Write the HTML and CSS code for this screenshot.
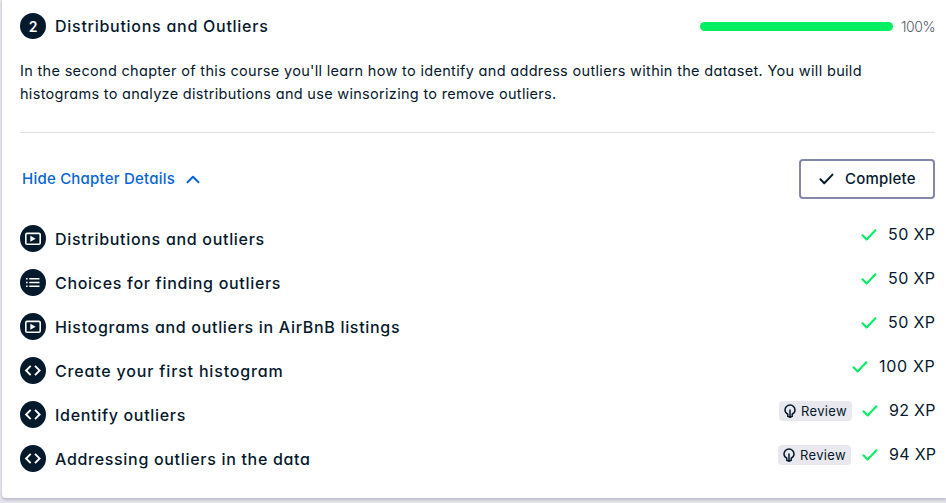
FILE: index.html
```
<!DOCTYPE html>
<html lang="en">
<head>
<meta charset="utf-8">
<title>Distributions and Outliers</title>
<link rel="stylesheet" href="styles.css">
</head>
<body>
<svg class="defs" aria-hidden="true">
  <symbol id="video" viewBox="0 0 26 27"><rect x="5.8" y="8.4" width="14.4" height="10.8" rx="1.3" fill="none" stroke="#fff" stroke-width="1.6"/><path d="M10.3 10.7v6l5.4-3z" fill="#fff"/></symbol>
  <symbol id="list" viewBox="0 0 26 27"><path d="M6 9.8h1.7M6 13.5h1.7M6 17.2h1.7M9.3 9.8h10.2M9.3 13.5h10.2M9.3 17.2h10.2" stroke="#fff" stroke-width="1.6" fill="none"/></symbol>
  <symbol id="code" viewBox="0 0 26 27"><path d="M10.7 8.9 6.1 13.5l4.6 4.6M15 8.9l4.6 4.6-4.6 4.6" stroke="#fff" stroke-width="1.9" fill="none"/></symbol>
  <symbol id="check" viewBox="0 0 16 12"><path d="m1.5 6.3 4.1 4.2L14.4 1.3" fill="none" stroke="currentColor" stroke-width="2.1" stroke-linecap="round" stroke-linejoin="round"/></symbol>
  <symbol id="bulb" viewBox="0 0 12 14"><path d="M3.8 10.2C1.9 9.2 1 7.8 1 6a5 5 0 0 1 10 0c0 1.800-.9 3.200-2.800 4.200v2.200L6 13.200l-2.200-.8zM6 5.500v7" fill="none" stroke="currentColor" stroke-width="1.500" stroke-linejoin="round"/></symbol>
</svg>
<main class="card">
  <header class="head">
    <span class="badge">2</span>
    <h2 class="title">Distributions and Outliers</h2>
    <div class="progress"></div>
    <span class="percent">100%</span>
  </header>
  <p class="intro"><span class="line-a">In the second chapter of this course you'll learn how to identify and address outliers within the dataset. You will build</span><br><span class="line-b">histograms to analyze distributions and use winsorizing to remove outliers.</span></p>
  <div class="bar">
    <a class="toggle"><span class="label">Hide Chapter Details</span><svg class="chevron" viewBox="0 0 14 9"><path d="M1.500 7.300 7 1.800l5.500 5.500" fill="none" stroke="currentColor" stroke-width="2" stroke-linecap="round" stroke-linejoin="round"/></svg></a>
    <button class="complete"><svg class="tick"><use href="#check"/></svg><span class="label">Complete</span></button>
  </div>
  <ul class="list">
    <li><svg class="icon"><use href="#video"/></svg><span class="name">Distributions and outliers</span><span class="score"><svg class="check"><use href="#check"/></svg><span class="xp">50 XP</span></span></li>
    <li><svg class="icon"><use href="#list"/></svg><span class="name">Choices for finding outliers</span><span class="score"><svg class="check"><use href="#check"/></svg><span class="xp">50 XP</span></span></li>
    <li><svg class="icon"><use href="#video"/></svg><span class="name">Histograms and outliers in AirBnB listings</span><span class="score"><svg class="check"><use href="#check"/></svg><span class="xp">50 XP</span></span></li>
    <li><svg class="icon"><use href="#code"/></svg><span class="name wide">Create your first histogram</span><span class="score"><svg class="check"><use href="#check"/></svg><span class="xp hundred">100 XP</span></span></li>
    <li><svg class="icon"><use href="#code"/></svg><span class="name">Identify outliers</span><span class="score"><span class="review"><svg class="bulb"><use href="#bulb"/></svg><span>Review</span></span><svg class="check"><use href="#check"/></svg><span class="xp nineties">92 XP</span></span></li>
    <li><svg class="icon"><use href="#code"/></svg><span class="name">Addressing outliers in the data</span><span class="score"><span class="review last"><svg class="bulb"><use href="#bulb"/></svg><span>Review</span></span><svg class="check"><use href="#check"/></svg><span class="xp nineties">94 XP</span></span></li>
  </ul>
</main>
</body>
</html>
```

FILE: styles.css
```
* { box-sizing: border-box; }
body { margin: 0; height: 503px; overflow: hidden; background: #e5e4ec; color: #05192d; font-family: Inter, "Liberation Sans", sans-serif; font-feature-settings: "cv11"; }
.defs { display: none; }
.card { height: 498px; margin-left: 2px; padding: 13px 11px 0 18px; background: #fff; border-bottom-left-radius: 4px; box-shadow: 0 2px 3px #b9bac8; }
.head { display: flex; align-items: center; height: 26px; }
.badge, .icon { flex: none; width: 26px; border-radius: 50%; background: #05192d; color: #fff; }
.badge { display: flex; align-items: center; justify-content: center; height: 26px; font-size: 14px; font-weight: 600; }
.icon { align-self: flex-start; height: 27px; margin-top: 9px; }
.title { margin: 0 0 0 9px; font-size: 16px; line-height: 26px; font-weight: 500; letter-spacing: .73px; white-space: nowrap; }
.progress { width: 193px; height: 9px; margin-left: auto; border-radius: 5px; background: #03ef62; }
.percent { width: 34px; margin-left: 8px; font-size: 14px; font-weight: 300; color: #505a68; letter-spacing: -.4px; white-space: nowrap; }
.intro { height: 94px; margin: 0; padding-top: 20px; border-bottom: 1px solid #e1e1e5; font-size: 14.5px; line-height: 23px; letter-spacing: .32px; white-space: nowrap; }
.line-b { letter-spacing: .3px; }
.bar { display: flex; justify-content: space-between; align-items: center; height: 40px; margin-top: 26px; }
.label { margin-top: -1px; letter-spacing: .22px; }
.toggle { display: flex; align-items: center; gap: 11px; padding-left: 2px; color: #0865d4; font-size: 15px; font-weight: 500; }
.chevron { width: 14px; height: 9px; }
.complete { display: flex; align-items: center; gap: 11px; width: 136px; height: 40px; padding: 0 0 0 18px; border: 2px solid #8487aa; border-radius: 4px; background: #fff; color: #05192d; font: inherit; font-size: 15px; font-weight: 500; font-feature-settings: inherit; }
.tick { width: 15px; height: 12px; }
.list { list-style: none; margin: 17px 0 0; padding: 0; }
.list li { display: flex; align-items: center; height: 44px; }
.name { margin: 2px 0 0 9px; font-size: 16px; font-weight: 500; letter-spacing: .69px; white-space: nowrap; }
.wide { letter-spacing: .82px; }
.score { display: flex; align-items: center; margin: -8px 0 0 auto; }
.check { width: 16px; height: 12px; margin: 1px 11px 0 0; color: #03ef62; }
.xp { width: 47px; font-size: 16px; letter-spacing: .4px; white-space: nowrap; }
.hundred { width: 56px; letter-spacing: .7px; }
.nineties { width: 46px; letter-spacing: .3px; }
.review { display: flex; align-items: center; gap: 5px; width: 73px; height: 20px; margin: 1px 10px 0 0; padding-left: 5px; border-radius: 4px; background: #e9e8ee; font-size: 13px; letter-spacing: .35px; }
.last { margin-right: 11px; }
.bulb { width: 12px; height: 14px; }
```
